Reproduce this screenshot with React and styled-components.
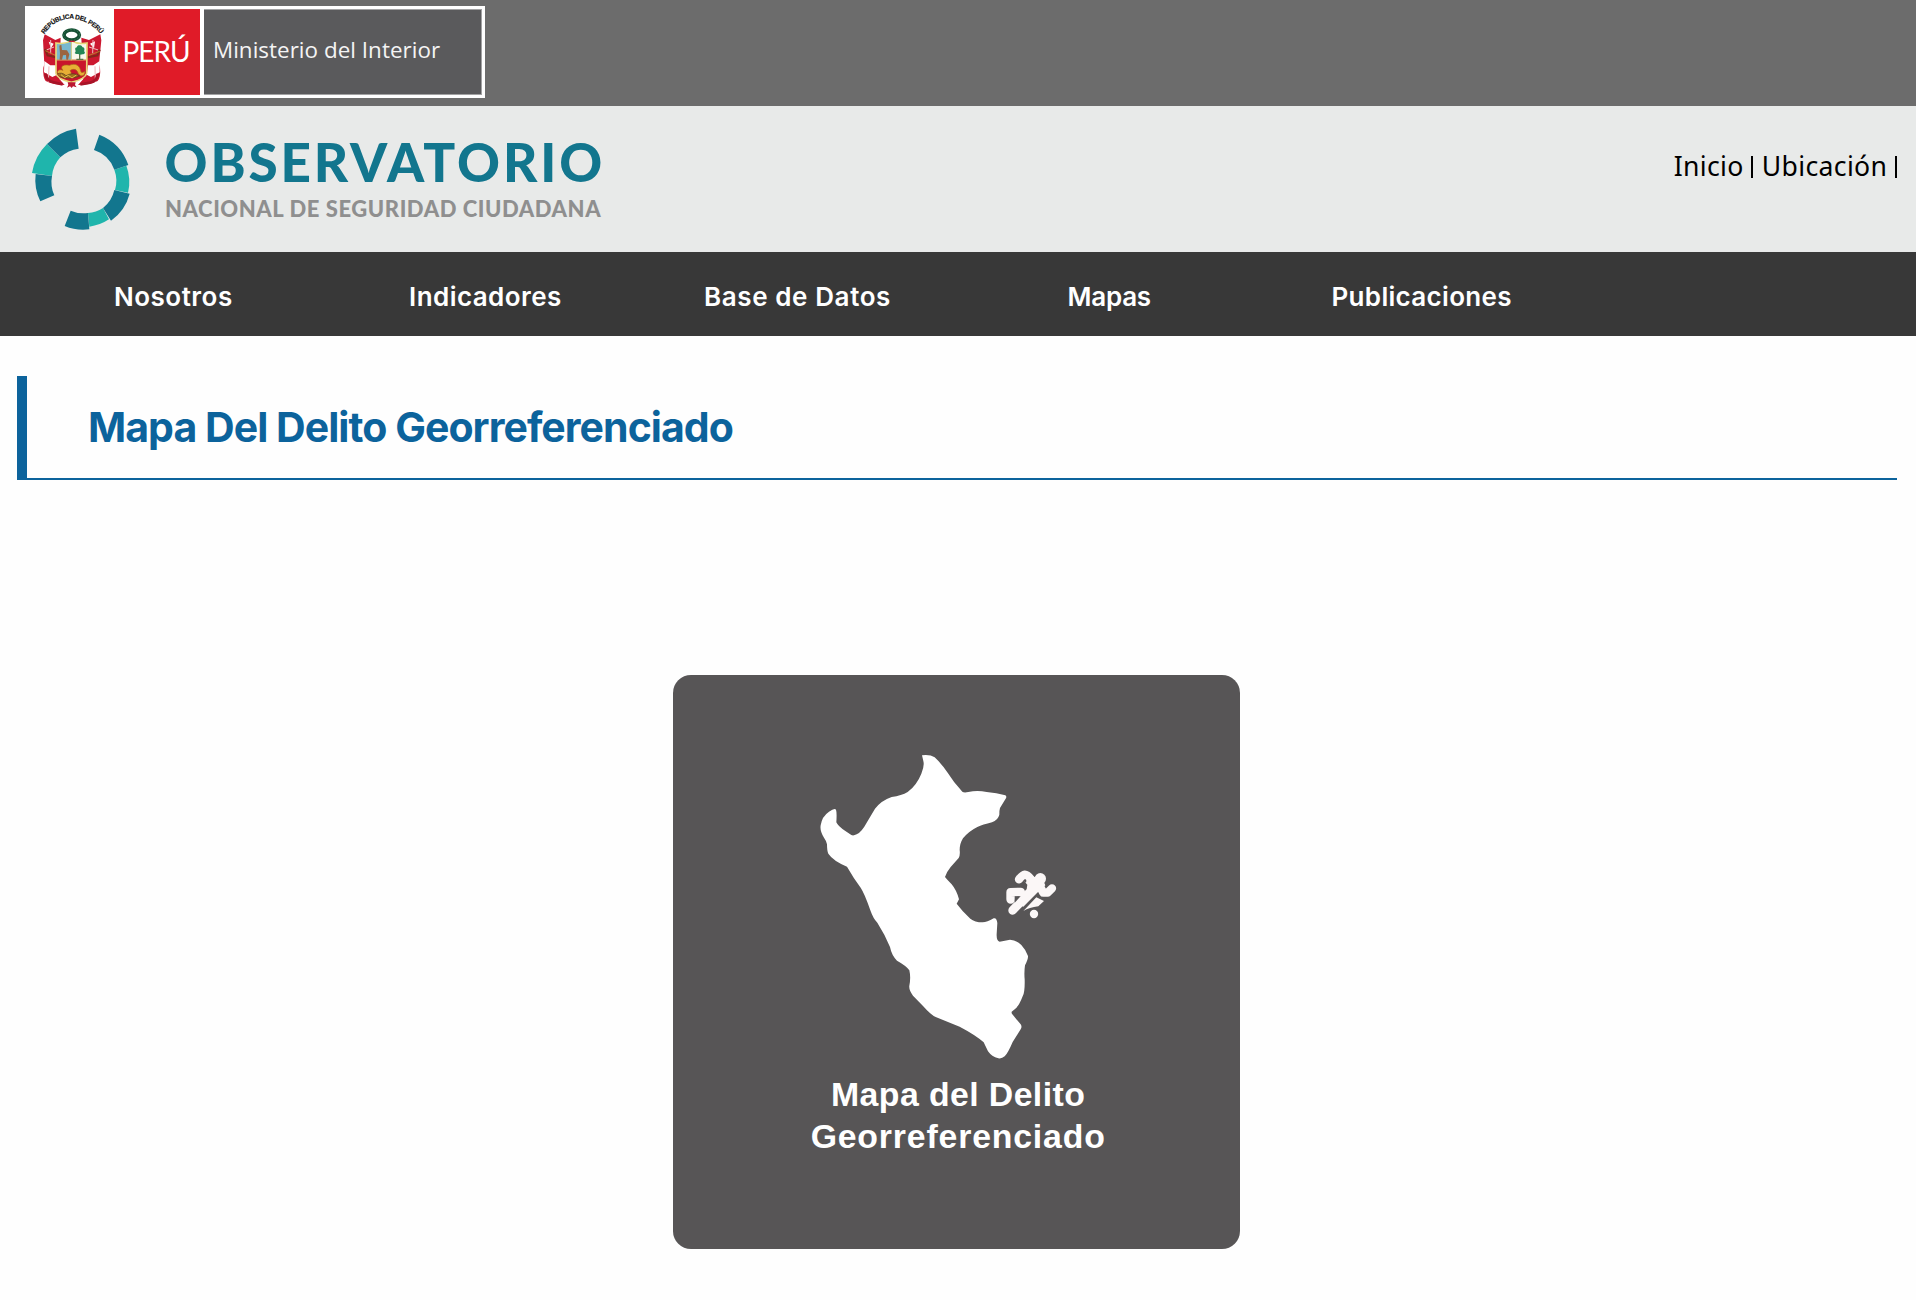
import React from "react";
import styled, { createGlobalStyle } from "styled-components";

const colors = {
  topBar: "#6c6c6c",
  header: "#e8eae9",
  nav: "#383838",
  red: "#e01b28",
  ministry: "#5a5a5c",
  brand: "#12768e",
  accent: "#1fb5ac",
  muted: "#8f8f8f",
  title: "#0c639c",
  card: "#575556",
};

const GlobalStyle = createGlobalStyle`
  * { box-sizing: border-box; }
  body { margin: 0; background: #fefefe; font-family: Inter, "Liberation Sans", sans-serif; }
`;

const Page = styled.div`
  min-height: 1300px;
  background: #fefefe;
`;

const TopBar = styled.div`
  height: 106px;
  padding: 6px 25px 0;
  background: ${colors.topBar};
`;

const GovernmentBadge = styled.div`
  display: flex;
  width: 460px;
  height: 92px;
  padding: 3px 3px 3px 0;
  background: #fff;
`;

const CrestBox = styled.div`
  width: 89px;
  height: 86px;
  svg { display: block; margin-top: -3px; }
`;

const CountryBox = styled.div`
  display: flex;
  align-items: center;
  width: 86px;
  padding: 0 0 2px 8.5px;
  background: ${colors.red};
  color: #fff;
  font: 400 28px/34px Lato, sans-serif;
  letter-spacing: -1px;
`;

const MinistryBox = styled.div`
  display: flex;
  align-items: center;
  flex: 1;
  margin-left: 4px;
  padding: 0 0 5px 9px;
  border: solid #a2a2a3;
  border-width: 1px 1px 1px 0;
  background: ${colors.ministry};
  color: #f4f4f4;
  font: 400 22.4px/30px "Open Sans", sans-serif;
  letter-spacing: 0.04px;
`;

const Header = styled.header`
  display: flex;
  justify-content: space-between;
  height: 146px;
  padding-left: 25px;
  padding-right: 19px;
  background: ${colors.header};
`;

const Brand = styled.div`
  display: flex;
  svg { display: block; margin-top: 14px; }
`;

const BrandText = styled.div`
  display: flex;
  flex-direction: column;
  gap: 6px;
  padding: 29px 0 0 27.5px;
`;

const BrandName = styled.div`
  color: ${colors.brand};
  font: 900 53px/54px Lato, sans-serif;
  letter-spacing: 2.9px;
`;

const BrandTagline = styled.div`
  padding-left: 0.5px;
  color: ${colors.muted};
  font: 900 22px/28px Lato, sans-serif;
  letter-spacing: 0.56px;
  white-space: nowrap;
`;

const QuickLinks = styled.div`
  display: flex;
  height: 36px;
  margin-top: 42px;
  align-items: center;
  color: #000;
  font: 400 26.6px/36px "Noto Sans", sans-serif;
  letter-spacing: 0.33px;
`;

const Divider = styled.span`
  width: 2px;
  height: 22px;
  margin: 2px ${(p) => (p.$last ? 0 : 8.5)}px 0 7.7px;
  background: #000;
`;

const Nav = styled.nav`
  display: grid;
  grid-template-columns: 295px 295px 363.5px 264px auto;
  align-items: center;
  height: 84px;
  padding: 5px 0 0 114px;
  background: ${colors.nav};
`;

const NavItem = styled.span`
  color: #fff;
  font: 600 26px/34px Inter, sans-serif;
  letter-spacing: ${(p) => p.$tracking}px;
`;

const TitleBlock = styled.h1`
  display: flex;
  align-items: center;
  height: 104px;
  margin: 40px 19px 0 17px;
  padding: 0 0 2px 61px;
  border-left: 10px solid ${colors.title};
  box-shadow: inset 0 -2px 0 ${colors.title};
  color: ${colors.title};
  font: 700 41px/50px Inter, sans-serif;
  letter-spacing: -0.95px;
`;

const Card = styled.div`
  display: flex;
  flex-direction: column;
  width: 567px;
  height: 574px;
  margin: 195px 0 0 673.4px;
  padding-top: 55px;
  border-radius: 18px;
  background: ${colors.card};
  svg { display: block; margin-left: 106.6px; }
`;

const CardLabel = styled.div`
  margin-top: 4px;
  padding-left: 2.5px;
  color: #fff;
  font: 700 33.8px/41.5px "Liberation Sans", Arial, sans-serif;
  text-align: center;
`;

const CardLine = styled.div`
  letter-spacing: ${(p) => p.$tracking}px;
`;

function Crest() {
  return (
    <svg width="89" height="92" viewBox="-15 3 267 276">
      <defs>
        <path id="motto" d="M43 88 C68 50 100 40 126 41 C158 43 192 60 217 94" />
        <clipPath id="shield">
          <path d="M78 114 Q105 119 124 107 Q145 119 171 114 L170 205 Q166 222 124 232 Q81 222 78 205 Z" />
        </clipPath>
      </defs>
      <text fill="#111" stroke="#111" strokeWidth="0.5" fontFamily="Liberation Sans, sans-serif" fontSize="19.5" fontWeight="700">
        <textPath href="#motto" textLength="200">REPÚBLICA DEL PERÚ</textPath>
      </text>
      {/* flags and standards */}
      <path d="M44 88 L76 105 L92 98 L88 222 L104 240 Q70 240 47 228 Q38 215 40 188 L43 178 L39 106 Z" fill="#cc1830" />
      <path d="M211 88 L177 105 L154 98 L160 222 L144 240 Q180 240 203 228 Q213 215 210 188 L207 178 L214 106 Z" fill="#cc1830" />
      <path d="M56 110 L71 116 L63 130 Z M43 168 L61 181 L77 181 L82 209 L67 216 L42 202 Z M195 109 L180 116 L192 130 Z M209 168 L190 181 L174 181 L170 209 L183 216 L209 202 Z" fill="#fff" />
      <path d="M62 105 L62 145 M72 126 L49 135 M189 105 L188 145 M177 126 L205 135 M57 184 L55 231 M195 184 L196 230" stroke="#f0b8bd" strokeWidth="3" fill="none" />
      <path d="M45 132 L53 151 L80 157 M209 134 L202 151 L172 157" stroke="#85281b" strokeWidth="7" fill="none" />
      <path d="M46 137 L76 151 M209 139 L177 151" stroke="#bb7c2b" strokeWidth="3" />
      <path d="M46 206 Q52 230 72 232 L98 238 M204 206 Q200 229 180 233 L151 238" stroke="#a71428" strokeWidth="8" fill="none" />
      {/* shield */}
      <g clipPath="url(#shield)">
        <rect x="75" y="105" width="99" height="130" fill="#f8f8ec" />
        <rect x="75" y="105" width="50" height="61" fill="#78b8cf" />
        <rect x="75" y="164" width="99" height="72" fill="#c9152c" />
      </g>
      <path d="M78 114 Q105 119 124 107 Q145 119 171 114 L170 205 Q166 222 124 232 Q81 222 78 205 Z" fill="none" stroke="#e7d879" strokeWidth="5" />
      <path d="M124 111 V166 M79 165 H170" stroke="#dfcf6e" strokeWidth="2.5" />
      <path d="M88 122 L94 119 L96 135 L111 136 L118 148 L114 164 L109 164 L108 150 L99 151 L96 164 L89 164 L90 145 Z" fill="#9b653f" />
      <path d="M149 137 V164 M139 163 H160" stroke="#587445" strokeWidth="4" />
      <path d="M149 121 C140 119 142 130 136 128 C134 136 140 137 134 144 C140 151 145 143 149 151 C153 145 162 151 165 143 C159 136 167 135 161 127 C156 130 157 120 149 121Z" fill="#238755" />
      <path d="M84 208 C78 198 88 191 99 196 C88 184 101 177 118 181 C137 173 149 182 152 197 Q153 207 165 199 C165 215 152 216 145 206 C141 192 130 190 120 197 C134 213 108 224 84 208Z" fill="#e7af35" stroke="#a66518" strokeWidth="2" />
      <path d="M82 207 Q96 200 108 212 Q130 200 149 213 Q120 225 89 215" fill="#9f701d" stroke="#4c3a1c" strokeWidth="2" />
      <path d="M93 209 L104 218 L115 211 L126 219 L139 210" stroke="#e7c34a" strokeWidth="3" fill="none" />
      {/* wreath */}
      <ellipse cx="125" cy="90" rx="23" ry="15" fill="#fff" stroke="#174f34" strokeWidth="11" />
      <ellipse cx="125" cy="90" rx="24" ry="16" fill="none" stroke="#35845a" strokeWidth="3" strokeDasharray="4 6" />
      <path d="M117 109 H134" stroke="#c91d31" strokeWidth="4" />
      {/* ribbon */}
      <path d="M113 232 L137 232 L135 240 L140 247 L129 244 L125 249 L120 244 L111 248 L115 240 Z" fill="#bb1730" />
    </svg>
  );
}

function ObservatoryLogo() {
  return (
    <svg width="112" height="115" viewBox="75 60 336 345">
      <g fill={colors.accent}>
        <path d="M96 219 A158 158 0 0 1 141 132 L181 172 A96 96 0 0 0 156 228 Z" />
        <path d="M379 197 A137 137 0 0 1 384 278 L345 270 A96 96 0 0 0 343 209 Z" />
        <path d="M327 358 A137 137 0 0 1 268 380 L264 339 A96 96 0 0 0 309 324 Z" />
      </g>
      <g fill={colors.brand}>
        <path d="M141 132 A158 158 0 0 1 228 86 L236 146 A96 96 0 0 0 181 172 Z" />
        <path d="M107 222 L156 228 A96 96 0 0 0 163 286 L121 304 A144 144 0 0 1 107 222 Z" />
        <path d="M298 104 A150 150 0 0 1 385 195 L343 209 A96 96 0 0 0 282 150 Z" />
        <path d="M389 281 A144 144 0 0 1 333 362 L309 324 A96 96 0 0 0 343 270 Z" />
        <path d="M268 388 A144 144 0 0 1 194 378 L212 332 A96 96 0 0 0 264 339 Z" />
      </g>
    </svg>
  );
}

function PeruMap() {
  return (
    <svg width="320" height="340" viewBox="0 0 960 1020">
      <path
        fill="#fff"
        d="M426 76 Q450 73 464 82 Q487 104 503 128 Q521 157 547 185 Q552 189 565 186 Q592 180 620 186 Q650 188 676 196 Q682 200 676 208 L660 234 Q658 240 658 254 Q654 270 636 277 Q608 284 592 291 Q566 304 549 325 Q539 341 539 360 Q541 376 536 384 L512 411 Q499 427 495 441 Q503 451 515 463 Q530 481 537 508 L530 521 Q546 543 571 566 Q584 577 608 577 Q621 577 641 565 Q650 562 652 579 L650 612 Q649 632 659 635 L690 629 Q707 629 724 645 Q738 660 744 678 Q745 687 735 706 Q732 727 734 748 Q735 787 728 799 Q717 828 706 836 L695 845 Q694 850 697 853 L722 883 Q727 890 722 898 L698 936 Q683 971 674 979 Q665 987 655 985 Q635 980 624 964 L611 937 Q590 917 539 890 L467 861 Q453 855 429 828 L399 797 Q386 780 388 767 Q393 742 388 721 Q380 708 351 692 Q335 676 330 651 Q315 614 292 578 Q280 567 271 541 Q254 491 242 473 Q221 445 201 410 Q159 392 145 371 Q141 364 141 343 Q140 334 132 323 Q119 302 122 286 Q126 259 147 245 Q164 233 168 239 Q171 247 169 277 Q175 290 195 302 L214 315 Q220 318 230 313 Q245 306 260 278 L285 236 Q305 211 335 201 Q365 197 383 186 Q410 166 424 131 Q434 107 430 93 Z"
      />
      {/* running figure */}
      <g fill="none" stroke="#fbf7f7" strokeLinecap="round" strokeLinejoin="round">
        <path d="M717 448 Q728 435 735 434 Q742 434 753 448" strokeWidth="25" />
        <path d="M722 486 L692 487 L692 508" strokeWidth="26" />
        <path d="M698 541 L760 477" strokeWidth="26" />
        <path d="M776 462 L790 488 L803 488 L816 475" strokeWidth="25" />
      </g>
      <path d="M738 458 L742 438 L765 441 L790 452 L796 466 L771 489 L730 530 L702 516 L740 478 L742 464 L732 453 Z" fill="#fbf7f7" />
      <path d="M704 499 L722 499 L704 518 Z" fill={colors.card} />
      <circle cx="781" cy="446" r="17" fill="#fbf7f7" />
      <path d="M730 543 L769 502 L792 513 L775 529 Q748 532 730 543 Z" fill="#fbf7f7" />
      <circle cx="762" cy="552" r="12.5" fill="#fbf7f7" />
    </svg>
  );
}

const navItems = [
  { label: "Nosotros", tracking: 0.5 },
  { label: "Indicadores", tracking: 0.44 },
  { label: "Base de Datos", tracking: 0.6 },
  { label: "Mapas", tracking: -0.25 },
  { label: "Publicaciones", tracking: 0.32 },
];

export default function App() {
  return (
    <Page>
      <GlobalStyle />
      <TopBar>
        <GovernmentBadge>
          <CrestBox><Crest /></CrestBox>
          <CountryBox>PERÚ</CountryBox>
          <MinistryBox>Ministerio del Interior</MinistryBox>
        </GovernmentBadge>
      </TopBar>
      <Header>
        <Brand>
          <ObservatoryLogo />
          <BrandText>
            <BrandName>OBSERVATORIO</BrandName>
            <BrandTagline>NACIONAL DE SEGURIDAD CIUDADANA</BrandTagline>
          </BrandText>
        </Brand>
        <QuickLinks>
          <span>Inicio</span>
          <Divider />
          <span>Ubicación</span>
          <Divider $last />
        </QuickLinks>
      </Header>
      <Nav>
        {navItems.map((item) => (
          <NavItem key={item.label} $tracking={item.tracking}>{item.label}</NavItem>
        ))}
      </Nav>
      <TitleBlock>Mapa Del Delito Georreferenciado</TitleBlock>
      <Card>
        <PeruMap />
        <CardLabel>
          <CardLine $tracking={0.42}>Mapa del Delito</CardLine>
          <CardLine $tracking={0.83}>Georreferenciado</CardLine>
        </CardLabel>
      </Card>
    </Page>
  );
}
